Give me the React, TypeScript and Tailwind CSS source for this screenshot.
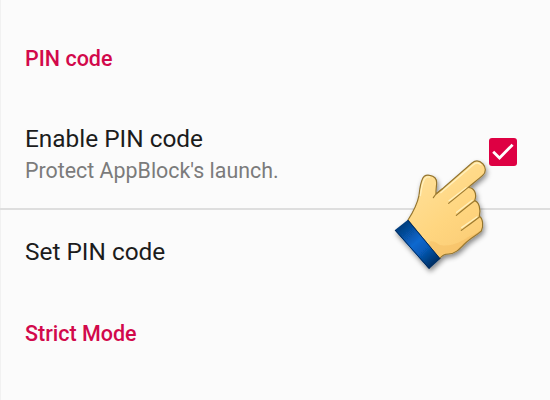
import type { ReactNode } from "react";

function SectionTitle({ children }: { children: ReactNode }) {
  return (
    <h2 className="text-[21.5px] leading-6 font-medium text-[#d2094b]">
      {children}
    </h2>
  );
}

function Checkbox() {
  return (
    <button
      role="checkbox"
      aria-checked="true"
      aria-label="Enable PIN code"
      className="w-7 h-7 mb-1.5 rounded-[3px] bg-[#de0043]"
    >
      <svg viewBox="0 0 28 28" className="w-full h-full" fill="none">
        <path d="M4.2 13.8 10.5 20 23.6 6.7" stroke="#fff" strokeWidth="2.8" />
      </svg>
    </button>
  );
}

function PointingHand() {
  return (
    <svg
      viewBox="0 0 510 465"
      className="absolute left-[380px] top-[125px] w-[170px] h-[155px] pointer-events-none"
      fill="none"
      strokeLinecap="round"
      strokeLinejoin="round"
    >
      <defs>
        <linearGradient id="skin" x1="110" y1="170" x2="270" y2="370" gradientUnits="userSpaceOnUse">
          <stop offset="0" stopColor="#ffdf96" />
          <stop offset="0.55" stopColor="#ffd680" />
          <stop offset="1" stopColor="#fbcd76" />
        </linearGradient>
        <linearGradient id="cuff" x1="64" y1="300" x2="164" y2="416" gradientUnits="userSpaceOnUse">
          <stop offset="0" stopColor="#053c7c" />
          <stop offset="0.45" stopColor="#0868cf" />
          <stop offset="0.65" stopColor="#075cba" />
          <stop offset="1" stopColor="#032e62" />
        </linearGradient>
        <filter id="shadow" x="-20%" y="-20%" width="140%" height="140%">
          <feDropShadow dx="4" dy="9" stdDeviation="8" floodColor="#000" floodOpacity="0.45" />
        </filter>
      </defs>
      <g filter="url(#shadow)">
        <path
          d="M84 285C100 260 112 237 117 211C119 194 120 181 126 165C130 153 139 149 149 151C162 153 170 160 170 173C170 184 167 193 168 207L190 189L276 114C287 105 299 107 309 117C318 127 319 141 308 151C295 163 280 174 265 187C282 188 292 205 284 227C297 231 303 252 298 274C309 281 311 303 304 318C290 330 270 340 253 357C237 374 224 387 205 387C194 387 186 390 178 402Z"
          fill="url(#skin)"
          stroke="#94752f"
          strokeWidth="3.5"
        />
        <path d="M84 284 181 401 147 432 44 316Z" fill="url(#cuff)" />
      </g>
      {/* light edges */}
      <g stroke="#fff0bd" strokeWidth="4">
        <path d="M121 212C124 195 125 181 131 168C134 158 141 155 149 156" />
        <path d="M182 203 279 120C287 112 296 113 303 119" />
        <path d="M207 227 258 188M230 262 277 226M245 308 291 276" />
      </g>
      {/* creases */}
      <g stroke="#9c7a30" strokeWidth="3.5">
        <path d="M168 207 160 218M168 207 188 191" />
        <path d="M265 187C246 202 226 219 206 235" />
        <path d="M284 227C264 242 247 256 229 271" />
        <path d="M298 276C279 291 262 303 244 316" />
      </g>
      <path
        d="M149 350C164 345 172 359 185 361C218 365 244 350 268 334C285 326 295 322 303 314C301 324 286 329 274 338C253 352 239 379 211 384C195 384 187 385 178 398L145 358Z"
        fill="#eeb052"
        opacity="0.3"
      />
      <path d="M84 286 180 401" stroke="#032a5b" strokeWidth="3" />
      <path d="M147 430 46 316" stroke="#032a5b" strokeWidth="3" />
    </svg>
  );
}

export default function App() {
  return (
    <main className="relative w-[550px] h-[400px] overflow-hidden bg-[#fbfbfb] shadow-[inset_1px_0_0_#f1f1f1] font-['Roboto',sans-serif]">
      <section className="h-[208px] pt-[47px] pl-[25px] pr-[33px]">
        <SectionTitle>PIN code</SectionTitle>
        <div className="flex items-center justify-between mt-[52px]">
          <div>
            <p className="text-[24.4px] leading-8 text-[#1c1c1c]">Enable PIN code</p>
            <p className="text-[21.4px] leading-8 text-[#7b7b7b]">
              Protect AppBlock's launch.
            </p>
          </div>
          <Checkbox />
        </div>
      </section>
      <section className="border-t-2 border-[#dedede] pt-[26px] pl-[25px]">
        <p className="text-[24.4px] leading-8 text-[#1c1c1c]">Set PIN code</p>
        <div className="mt-[54px]">
          <SectionTitle>Strict Mode</SectionTitle>
        </div>
      </section>
      <PointingHand />
    </main>
  );
}
